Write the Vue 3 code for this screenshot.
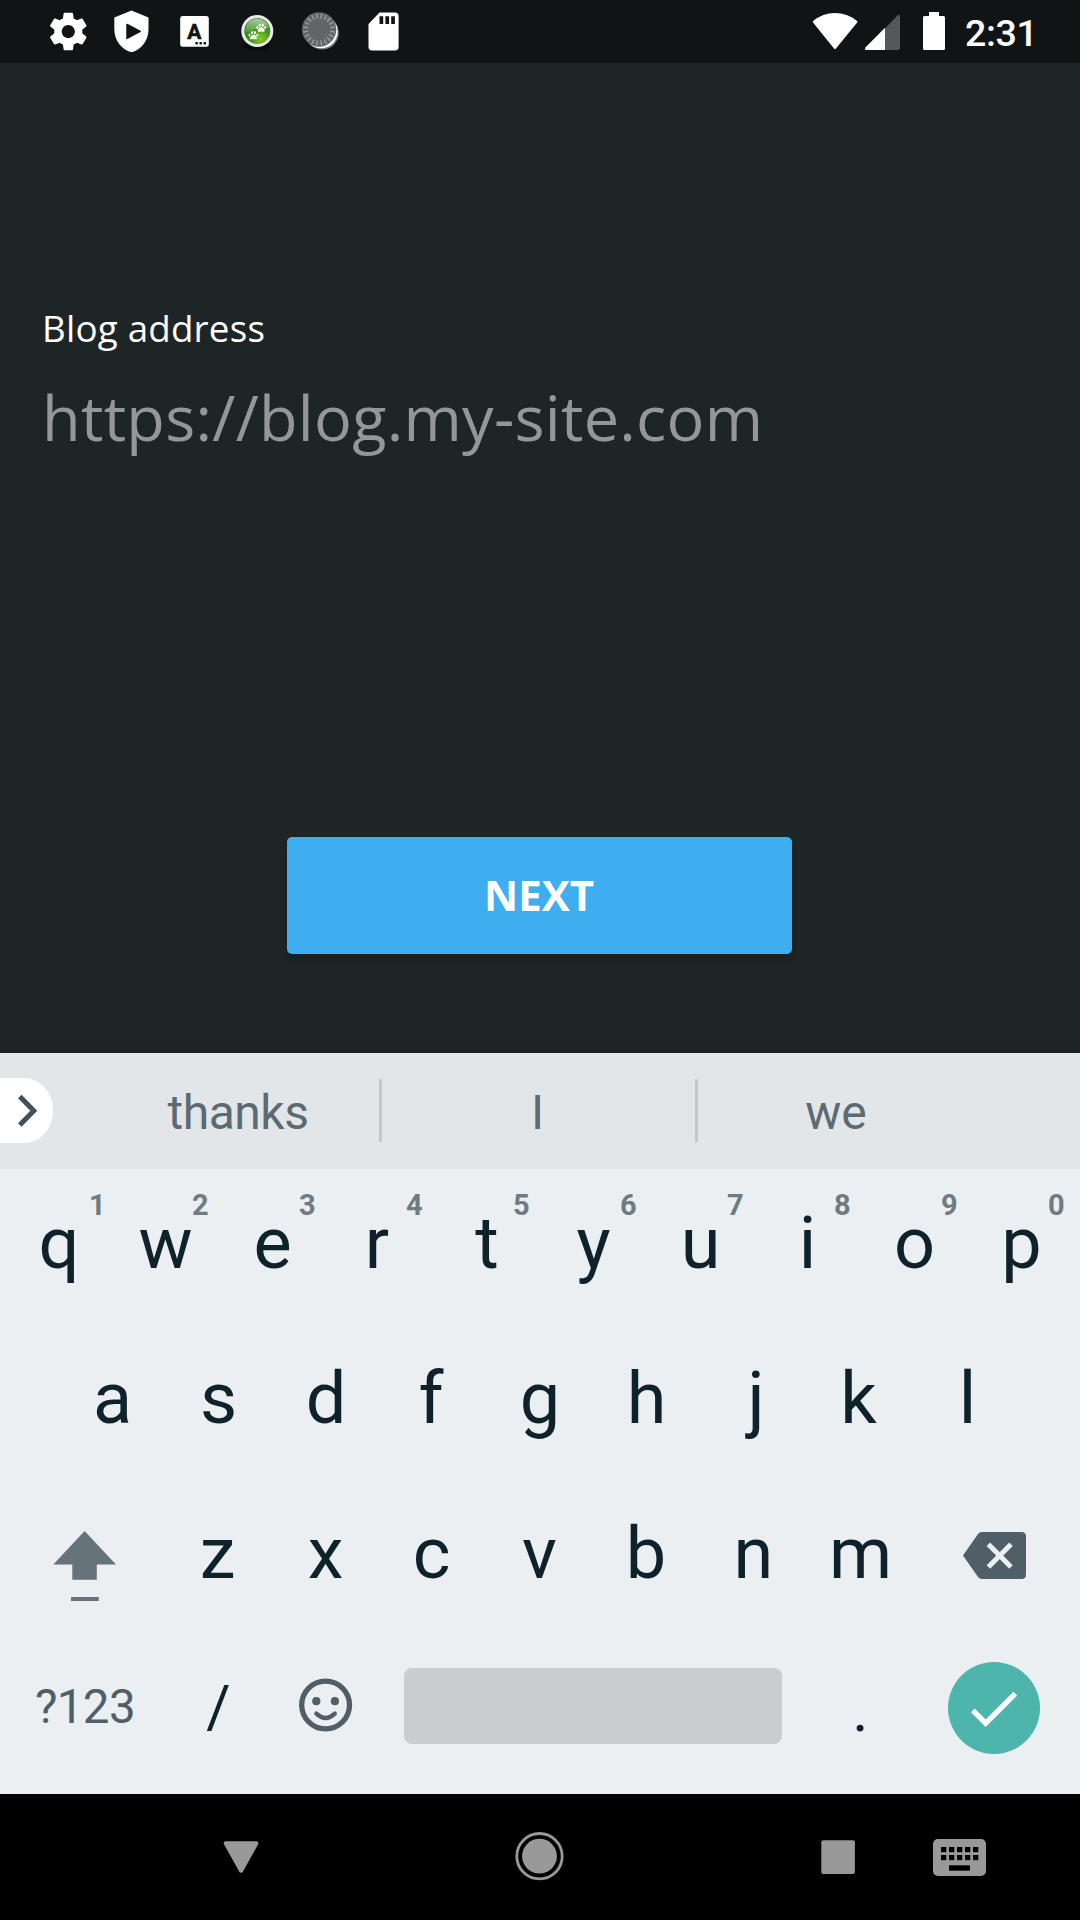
<script setup>
// Each key: letter, optional long-press digit, optical shift of the glyph in px
const rowOne = [
  ['q', '1', 0.5], ['w', '2', 0], ['e', '3', 0], ['r', '4', -2.5], ['t', '5', 0.5],
  ['y', '6', 0], ['u', '7', 0], ['i', '8', 0], ['o', '9', 0], ['p', '0', 0],
]
const rowTwo = [
  ['a', 0.5], ['s', -0.5], ['d', 0], ['f', -2], ['g', 0], ['h', -0.5], ['j', 2], ['k', -2.5], ['l', -0.5],
]
const rowThree = [['z', -1], ['x', 0], ['c', -1], ['v', 0], ['b', -0.5], ['n', 0], ['m', 0]]
const ticks = Array.from({ length: 20 }, (_, i) => i * 18)
const keyDots = [0, 1, 2, 3, 4]
const shift = (px) => ({ transform: `translateX(${px}px)` })
</script>

<template>
  <div class="screen">
    <header class="status">
      <div class="notifications">
        <svg viewBox="0 0 63 63">
          <g transform="translate(8.8 9) scale(1.875)" fill="#fff">
            <path d="M19.43 12.98c.04-.32.07-.64.07-.98s-.03-.66-.07-.98l2.11-1.65c.19-.15.24-.42.12-.64l-2-3.46c-.12-.22-.39-.3-.61-.22l-2.49 1c-.52-.4-1.08-.73-1.69-.98l-.38-2.65C14.46 2.18 14.25 2 14 2h-4c-.25 0-.46.18-.49.42l-.38 2.65c-.61.25-1.17.59-1.69.98l-2.49-1c-.23-.09-.49 0-.61.22l-2 3.46c-.13.22-.07.49.12.64l2.11 1.65c-.04.32-.07.65-.07.98s.03.66.07.98l-2.11 1.65c-.19.15-.24.42-.12.64l2 3.46c.12.22.39.3.61.22l2.49-1c.52.4 1.08.73 1.69.98l.38 2.65c.03.24.24.42.49.42h4c.25 0 .46-.18.49-.42l.38-2.65c.61-.25 1.17-.59 1.69-.98l2.49 1c.23.09.49 0 .61-.22l2-3.46c.12-.22.07-.49-.12-.64l-2.11-1.65zM12 15.5c-1.93 0-3.5-1.57-3.5-3.5s1.57-3.5 3.5-3.5 3.5 1.57 3.5 3.5-1.57 3.5-3.5 3.5z" />
          </g>
        </svg>
        <svg viewBox="0 0 63 63">
          <path fill="#fff" d="M31.5 10.5 48.5 17.5V29C48.5 40 42 49.5 31.5 52.3 21 49.5 14.3 40 14.3 29V17.5Z" />
          <path fill="#101415" stroke="#101415" stroke-width="1.5" stroke-linejoin="round" d="M27 24.5 40.2 31.3 27 38.4Z" />
        </svg>
        <svg viewBox="0 0 63 63">
          <rect x="17.2" y="16" width="28.6" height="30.7" rx="2.5" fill="#fff" />
          <text x="31.3" y="39" text-anchor="middle" class="glyph-a">A</text>
          <g fill="#101415">
            <rect x="32.3" y="42" width="2.6" height="2.6" rx=".8" />
            <rect x="36.4" y="42" width="2.6" height="2.6" rx=".8" />
            <rect x="40.5" y="42" width="2.6" height="2.6" rx=".8" />
          </g>
        </svg>
        <svg viewBox="0 0 63 63">
          <defs>
            <radialGradient id="ball" cx=".62" cy=".8" r=".75">
              <stop offset="0" stop-color="#8fc926" />
              <stop offset=".5" stop-color="#3f9a1c" />
              <stop offset="1" stop-color="#2f7d20" />
            </radialGradient>
            <linearGradient id="gloss" x1="0" y1="0" x2="0" y2="1">
              <stop offset="0" stop-color="#fff" stop-opacity=".6" />
              <stop offset="1" stop-color="#fff" stop-opacity=".08" />
            </linearGradient>
          </defs>
          <ellipse cx="31.5" cy="46" rx="14" ry="4" fill="#090c0c" />
          <circle cx="31.3" cy="31" r="16" fill="#e9ebea" />
          <circle cx="31.3" cy="31" r="13" fill="url(#ball)" />
          <path d="M19.5 28a12 11.5 0 0 1 23.6 0Q31 27 19.5 33Z" fill="url(#gloss)" />
          <g v-for="p in [[35.2, 29.5], [27.4, 37]]" :key="p[0]" :transform="`translate(${p[0]} ${p[1]})`" fill="#fff">
            <path d="M0-2.3C1.6-2.3 4 .1 3.4 1.5 2.8 3 1.2 2 0 2S-2.8 3-3.4 1.5C-4 .1-1.6-2.3 0-2.3Z" />
            <ellipse cx="-3.9" cy="-1.9" rx="1" ry="1.4" />
            <ellipse cx="-1.5" cy="-4.4" rx="1.1" ry="1.6" />
            <ellipse cx="1.5" cy="-4.4" rx="1.1" ry="1.6" />
            <ellipse cx="3.9" cy="-1.9" rx="1" ry="1.4" />
          </g>
        </svg>
        <svg viewBox="0 0 63 63">
          <circle cx="33.2" cy="33" r="16.6" fill="#777a7b" />
          <circle cx="32" cy="31.6" r="16.7" fill="#fff" />
          <circle cx="30.1" cy="29.5" r="17.2" fill="#626465" />
          <g stroke="#96989a" stroke-width="1.5">
            <line v-for="t in ticks" :key="t" x1="30.1" y1="13.4" x2="30.1" y2="18.4" :transform="`rotate(${t + 9} 30.1 29.5)`" />
          </g>
        </svg>
        <svg viewBox="0 0 63 63">
          <path fill="#fff" fill-rule="evenodd" d="M27.5 12.5H43Q46.6 12.5 46.6 16V47Q46.6 50.4 43 50.4H20Q16.5 50.4 16.5 47V24ZM27.5 16.3V24H31.2V16.3ZM33.4 16.3V24H37.1V16.3ZM39.2 16.3V24H42.9V16.3Z" />
        </svg>
      </div>
      <div class="system">
        <svg class="signals" viewBox="810 0 140 63">
          <path fill="#fff" stroke="#fff" stroke-width="2" stroke-linejoin="round" d="M835 48 813.8 21.8Q823 14 835 14T856.4 21.8Z" />
          <path fill="#555859" d="M885 28.5 897.5 15.6Q900 13.6 900 16.5V48Q900 50 898 50H885Z" />
          <path fill="#fff" d="M885 27.8V50H866.5Q864 49.5 865.4 47.5Z" />
          <path fill="#fff" d="M929 12h10v4h4.5q1.5 0 1.5 1.5v31q0 1.5-1.5 1.5h-19q-1.5 0-1.5-1.5v-31q0-1.5 1.5-1.5h4.5z" />
        </svg>
        <span class="clock">2:31</span>
      </div>
    </header>

    <main class="form">
      <label class="label">Blog address</label>
      <div class="field">https://blog.my-site.com</div>
      <button class="next"><span>NEXT</span></button>
    </main>

    <section class="keyboard">
      <div class="suggestions">
        <div class="expand">
          <svg width="53" height="65" viewBox="0 0 53 65">
            <path d="M19.8 18.5 33.8 32.8 19.8 47" fill="none" stroke="#415059" stroke-width="5" />
          </svg>
        </div>
        <span class="word first">thanks</span>
        <i class="divider"></i>
        <span class="word second">I</span>
        <i class="divider"></i>
        <span class="word third">we</span>
      </div>

      <div class="rows">
        <div class="row">
          <div v-for="[letter, hint, dx] in rowOne" :key="letter" class="key">
            <span :style="shift(dx)">{{ letter }}</span><span class="hint">{{ hint }}</span>
          </div>
        </div>
        <div class="row">
          <div v-for="[letter, dx] in rowTwo" :key="letter" class="key">
            <span :style="shift(dx)">{{ letter }}</span>
          </div>
        </div>
        <div class="row third-row">
          <div class="key wide">
            <svg width="64" height="72" viewBox="53 1530 64 72" class="shift">
              <path fill="#66737a" d="M84.6 1531 116 1564.4H96.8V1579.8H72.3V1564.4H53.3ZM71 1597H98.8V1601H71Z" />
            </svg>
          </div>
          <div v-for="[letter, dx] in rowThree" :key="letter" class="key">
            <span :style="shift(dx)">{{ letter }}</span>
          </div>
          <div class="key wide-end">
            <svg width="63" height="47" viewBox="963 1532 63 47" class="backspace">
              <path fill="#505e67" d="M982 1532H1021.5Q1026 1532 1026 1536.5V1574.5Q1026 1579 1021.5 1579H982Q979.5 1579 978 1577L963 1555.5 978 1534Q979.5 1532 982 1532Z" />
              <path d="M988.4 1544.3 1011 1567M1011 1544.3 988.4 1567" stroke="#ebeff2" stroke-width="5" />
            </svg>
          </div>
        </div>
        <div class="row last-row">
          <div class="key wide symbols">?123</div>
          <div class="key slash">/</div>
          <div class="key">
            <svg width="54" height="54" viewBox="0 0 54 54" class="emoji">
              <circle cx="26.6" cy="27" r="23.9" fill="none" stroke="#505e67" stroke-width="5.3" />
              <circle cx="17.3" cy="23.2" r="4.1" fill="#505e67" />
              <circle cx="35.9" cy="23.2" r="4.1" fill="#505e67" />
              <path d="M17.4 35.6Q26.6 44.3 35.8 35.6" fill="none" stroke="#505e67" stroke-width="4.3" stroke-linecap="round" />
            </svg>
          </div>
          <div class="key space"><div class="bar"></div></div>
          <div class="key period">.</div>
          <div class="key wide-end">
            <div class="enter">
              <svg width="63" height="63" viewBox="0 0 24 24"><path fill="#fff" d="M9 16.17 4.83 12l-1.42 1.41L9 19 21 7l-1.41-1.41z" /></svg>
            </div>
          </div>
        </div>
      </div>
    </section>

    <nav class="nav">
      <svg width="1080" height="126" viewBox="0 1794 1080 126">
        <g fill="#999">
          <path stroke="#999" stroke-width="4" stroke-linejoin="round" d="M225.7 1843.2H256.4L241.1 1870.7Z" />
          <circle cx="539.5" cy="1856.2" r="17.4" />
          <circle cx="539.5" cy="1856.2" r="22.7" fill="none" stroke="#999" stroke-width="2.8" />
          <rect x="821.3" y="1840.2" width="33.6" height="33.7" rx="2" />
          <rect x="933" y="1839" width="53" height="37" rx="5" />
        </g>
        <g fill="#000">
          <rect v-for="n in keyDots" :key="'a' + n" :x="941 + n * 8" y="1847" width="5.3" height="5.2" />
          <rect v-for="n in keyDots" :key="'b' + n" :x="941 + n * 8" y="1855" width="5.3" height="5.2" />
          <rect x="949" y="1865.3" width="21" height="5.4" />
        </g>
      </svg>
    </nav>
  </div>
</template>

<style>
body {
  margin: 0;
  background: #000;
}
</style>

<style scoped>
.screen {
  width: 1080px;
  height: 1920px;
  display: flex;
  flex-direction: column;
  overflow: hidden;
  background: #1e2527;
  font-family: Roboto, "Liberation Sans", sans-serif;
}
svg {
  display: block;
  flex: none;
}
.status {
  height: 63px;
  flex: none;
  display: flex;
  justify-content: space-between;
  background: #101415;
}
.notifications {
  display: flex;
  padding-left: 36.8px;
}
.notifications svg {
  width: 63px;
  height: 63px;
}
.glyph-a {
  font: 700 21px Roboto, sans-serif;
  fill: #101415;
  stroke: #101415;
  stroke-width: 0.6px;
}
.system {
  display: flex;
  width: 270px;
}
.signals {
  width: 140px;
  height: 63px;
}
.clock {
  margin-left: 15px;
  font-size: 37.5px;
  font-weight: 500;
  line-height: 67px;
  letter-spacing: -0.3px;
  color: #fff;
}
.form {
  height: 990px;
  flex: none;
  box-sizing: border-box;
  padding: 240px 42px 0;
  display: flex;
  flex-direction: column;
  font-family: "Open Sans", "Noto Sans", sans-serif;
  background: linear-gradient(to bottom, #1e2527 975px, #1d2023 990px);
}
.label {
  font-size: 36.75px;
  line-height: 50px;
  letter-spacing: 0.2px;
  color: #fff;
}
.field {
  margin-top: 21px;
  font-size: 63px;
  line-height: 86px;
  letter-spacing: 0.27px;
  color: #949798;
  white-space: nowrap;
}
.next {
  width: 505px;
  height: 117px;
  margin: 377px 0 0 245px;
  padding: 0 1px 2px 0;
  border: 0;
  border-radius: 5px;
  background: #3eaef0;
  box-shadow: 0 4px 6px rgba(0, 0, 0, 0.2);
  font: 700 42px "Open Sans", "Noto Sans", sans-serif;
  color: #fff;
}
.keyboard {
  height: 741px;
  flex: none;
  background: #ebeff2;
  display: flex;
  flex-direction: column;
}
.suggestions {
  height: 116px;
  flex: none;
  display: flex;
  align-items: center;
  background: #e2e6e9;
}
.expand {
  width: 53px;
  height: 65px;
  margin-bottom: 2px;
  background: #fff;
  border-radius: 0 29px 29px 0 / 0 32px 32px 0;
}
.word {
  font-size: 48px;
  line-height: 60px;
  padding-top: 3px;
  color: #5c6a71;
  text-align: center;
}
.first {
  width: 326px;
  box-sizing: border-box;
  padding-left: 44px;
  letter-spacing: -0.5px;
}
.second {
  width: 313px;
  box-sizing: border-box;
  padding-right: 2px;
}
.third {
  width: 276px;
}
.divider {
  width: 3px;
  height: 63px;
  margin-bottom: 2px;
  background: #c3c7ca;
}
.rows {
  margin-top: -2px;
  display: flex;
  flex-direction: column;
}
.row {
  height: 154.5px;
  display: flex;
  justify-content: center;
}
.key {
  position: relative;
  width: 107px;
  height: 154.5px;
  display: flex;
  align-items: center;
  justify-content: center;
  font-size: 72px;
  line-height: 84px;
  color: #0e222b;
}
.third-row .key > span {
  margin-top: 2px;
}
.hint {
  position: absolute;
  top: 21px;
  left: 80px;
  width: 17px;
  font-size: 29px;
  line-height: 34px;
  font-weight: 700;
  color: #6f7b81;
}
.key:first-child .hint {
  left: 84px;
}
.wide {
  width: 160px;
}
.wide-end {
  width: 161px;
}
.last-row .key {
  height: 152.5px;
}
.symbols {
  font-size: 47.5px;
  letter-spacing: -0.6px;
  color: #505e67;
}
.slash {
  font-size: 59px;
}
.period {
  font-size: 62px;
  padding-top: 7px;
  box-sizing: border-box;
}
.space {
  width: 428px;
}
.bar {
  width: 378px;
  height: 76px;
  margin-bottom: 2px;
  border-radius: 8px;
  background: #c9cdd0;
}
.emoji {
  margin-bottom: 3px;
}
.shift {
  margin-top: 25px;
}
.backspace {
  margin-top: 4px;
}
.enter {
  width: 92px;
  height: 92px;
  margin: 3px 2px 0 0;
  border-radius: 50%;
  background: #4db5ac;
  display: flex;
  align-items: center;
  justify-content: center;
}
.nav {
  height: 126px;
  flex: none;
  background: #000;
}
</style>
